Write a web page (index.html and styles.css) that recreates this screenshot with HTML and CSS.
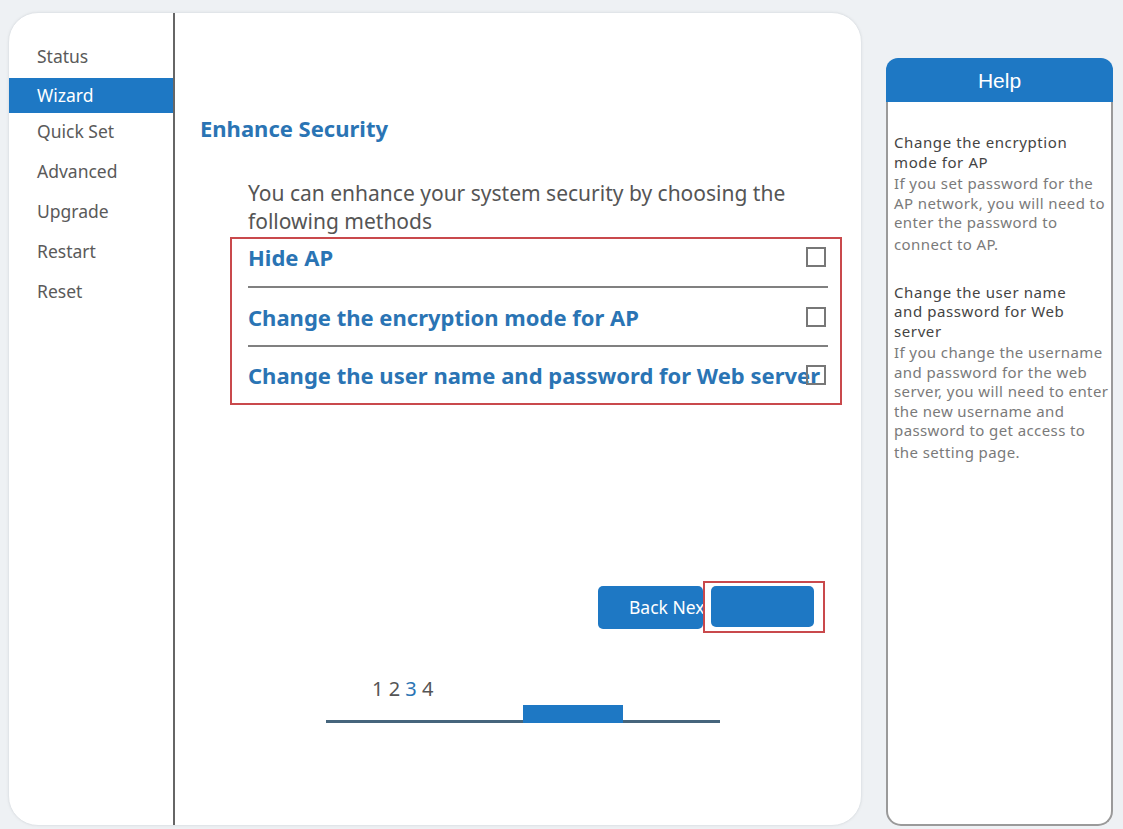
FILE: index.html
```html
<html>
<head>
<meta name="viewport" content="width=device-width, initial-scale=1.0">
<link rel="stylesheet" href="styles.css">
</head>
<body>
<div class="page">
<div class="card">
<div class="side">
<div class="item">Status</div>
<div class="item on">Wizard</div>
<div class="item">Quick Set</div>
<div class="item">Advanced</div>
<div class="item">Upgrade</div>
<div class="item">Restart</div>
<div class="item">Reset</div>
</div>
<div class="main">
<h2 class="title">Enhance Security</h2>
<p class="intro">You can enhance your system security by choosing the following methods</p>
<div class="opts">
<div class="row first"><span class="lbl">Hide AP</span><span class="box"></span></div>
<div class="row"><span class="lbl">Change the encryption mode for AP</span><span class="box"></span></div>
<div class="row last"><span class="lbl">Change the user name and password for Web server</span><span class="box"></span></div>
</div>
<div class="btns">
<button class="btn back">Back Next</button>
<div class="mark"><button class="btn next"></button></div>
</div>
<div class="steps">
<div class="nums">1 2 <b>3</b> 4</div>
<div class="track"><div class="cur"></div></div>
</div>
</div>
</div>
<div class="help">
<div class="head">Help</div>
<div class="body">
<p class="q">Change the encryption<br>mode for AP</p>
<p class="a">If you set password for the<br>AP network, you will need to<br>enter the password to</p>
<p class="a end">connect to AP.</p>
<p class="q">Change the user name<br>and password for Web<br>server</p>
<p class="a">If you change the username<br>and password for the web<br>server, you will need to enter<br>the new username and<br>password to get access to</p>
<p class="a end">the setting page.</p>
</div>
</div>
</div>
</body>
</html>
```
FILE: styles.css
```css
*{
margin:0;
padding:0;
box-sizing:border-box;
}
body{
background:#eef1f4;
font-family:"Noto Sans","Open Sans",sans-serif;
}
.page{
display:flex;
align-items:flex-start;
padding:12px 0 0 8px;
}
.card{
width:854px;
height:814px;
background:#fff;
border:1px solid #e1e5e9;
border-radius:30px;
display:flex;
box-shadow:0 0 3px rgba(0,0,0,0.06);
}
.side{
width:166px;
border-right:2px solid #666;
padding-top:32px;
}
.item{
font-size:17.5px;
color:#5a5a5a;
height:40px;
line-height:22px;
padding-left:28px;
}
.item.on{
background:#1e78c4;
color:#fff;
height:35px;
line-height:35px;
margin-top:-7px;
margin-bottom:7px;
}
.main{
flex:1;
padding:102px 0 0 25px;
}
.title{
font-size:22px;
color:#2a74b4;
font-weight:bold;
line-height:26px;
}
.intro{
font-size:21px;
color:#555;
line-height:28px;
margin:38px 0 0 48px;
width:570px;
}
.opts{
margin:2px 0 0 30px;
width:612px;
border:2px solid #c9494c;
padding:0 12px 0 16px;
}
.row{
display:flex;
align-items:center;
height:59px;
border-bottom:2px solid #808080;
}
.row.first{
height:49px;
padding-bottom:12px;
}
.row.last{
border-bottom:none;
height:56px;
}
.lbl{
flex:1;
min-width:0;
white-space:nowrap;
font-size:22px;
font-weight:bold;
color:#2a74b4;
}
.box{
flex:none;
width:20px;
height:20px;
border:2px solid #777;
margin-right:2px;
}
.btns{
display:flex;
justify-content:flex-end;
align-items:center;
margin:176px 36px 0 0;
}
.btn{
border:none;
background:#1e78c4;
color:#fff;
font-family:"Noto Sans",sans-serif;
font-size:17.5px;
border-radius:5px;
}
.back{
width:105px;
height:43px;
overflow:hidden;
white-space:nowrap;
text-align:left;
padding-left:31px;
}
.mark{
border:2px solid #c9494c;
padding:3px 9px 4px 6px;
}
.next{
display:block;
width:103px;
height:41px;
}
.steps{
margin:43px 0 0 126px;
width:394px;
}
.nums{
font-size:20px;
color:#555;
margin-left:46px;
letter-spacing:3px;
word-spacing:-6px;
line-height:26px;
}
.nums b{
font-weight:normal;
color:#2a74b4;
}
.track{
margin-top:1px;
height:20px;
border-bottom:3px solid #46657c;
position:relative;
}
.cur{
position:absolute;
left:197px;
top:2px;
width:100px;
height:18px;
background:#1e78c4;
}
.help{
margin:46px 0 0 24px;
width:227px;
height:768px;
display:flex;
flex-direction:column;
}
.head{
height:44px;
background:#1e78c4;
border-radius:12px 12px 0 0;
color:#fff;
font-family:"Liberation Sans",Arial,sans-serif;
font-size:21px;
text-align:center;
line-height:46px;
}
.body{
flex:1;
background:#fff;
border:2px solid #9a9a9a;
border-top:none;
border-radius:0 0 15px 15px;
padding:31px 0 0 6px;
white-space:nowrap;
}
.q{
font-size:15px;
letter-spacing:0.6px;
color:#444;
line-height:19.5px;
}
.a{
font-size:15px;
letter-spacing:0.4px;
color:#7a7a7a;
line-height:19.5px;
margin-top:2px;
}
.a.end{
margin-top:2.5px;
margin-bottom:28px;
}
```
